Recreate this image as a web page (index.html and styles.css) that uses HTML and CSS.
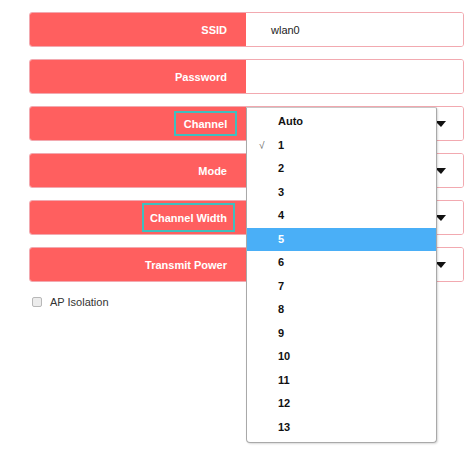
FILE: index.html
```
<!DOCTYPE html>
<html>
<head>
<meta charset="utf-8">
<link rel="stylesheet" href="styles.css">
</head>
<body>
<div class="form">
  <div class="row"><div class="label">SSID</div><div class="field">wlan0</div></div>
  <div class="row"><div class="label">Password</div><div class="field"></div></div>
  <div class="row"><div class="label"><span class="hl hl-channel">Channel</span></div><div class="field select"><span class="arrow"></span></div></div>
  <div class="row"><div class="label">Mode</div><div class="field select"><span class="arrow"></span></div></div>
  <div class="row"><div class="label"><span class="hl hl-width">Channel Width</span></div><div class="field select"><span class="arrow"></span></div></div>
  <div class="row"><div class="label">Transmit Power</div><div class="field select"><span class="arrow"></span></div></div>
  <label class="check"><span class="box"></span>AP Isolation</label>

  <ul class="dropdown">
    <li>Auto</li>
    <li class="checked">1</li>
    <li>2</li>
    <li>3</li>
    <li>4</li>
    <li class="active">5</li>
    <li>6</li>
    <li>7</li>
    <li>8</li>
    <li>9</li>
    <li>10</li>
    <li>11</li>
    <li>12</li>
    <li>13</li>
  </ul>
</div>
</body>
</html>
```

FILE: styles.css
```
html, body {
  margin: 0;
  padding: 0;
  background: #fff;
  font-family: "Liberation Sans", Arial, sans-serif;
}

body {
  min-height: 452px;
}

.form {
  position: relative;
  width: 435px;
  min-height: 440px;
  margin-left: 29px;
  padding-top: 12px;
  display: flex;
  flex-direction: column;
  gap: 12px;
}

.row {
  display: flex;
  height: 35px;
  box-sizing: border-box;
  border: 1px solid #f2a9b0;
  border-radius: 3px;
  overflow: hidden;
}

.label {
  width: 217px;
  flex: none;
  background: #ff5f5f;
  color: #fff;
  font-weight: bold;
  font-size: 11px;
  display: flex;
  align-items: center;
  justify-content: flex-end;
  padding-right: 19px;
  box-sizing: border-box;
  margin: -1px 0 -1px -1px;
}

.hl {
  display: inline-flex;
  align-items: center;
  justify-content: center;
  box-sizing: border-box;
  border: 2px solid #3fbfbf;
}

.hl-channel {
  width: 63px;
  height: 25px;
  margin-right: -10px;
}

.hl-width {
  width: 93px;
  height: 29px;
  margin-right: -8px;
}

.field {
  flex: 1;
  background: #fff;
  font-size: 11px;
  color: #222;
  display: flex;
  align-items: center;
  padding-left: 25px;
}

.select {
  justify-content: flex-end;
  padding-right: 17px;
}

.arrow {
  width: 0;
  height: 0;
  border-left: 6px solid transparent;
  border-right: 5px solid transparent;
  border-top: 6px solid #111;
  margin-top: 1px;
}

.check {
  display: flex;
  align-items: center;
  font-size: 11px;
  color: #333;
  margin-top: 1px;
  margin-left: 3px;
  height: 14px;
}

.box {
  width: 8px;
  height: 8px;
  border: 1px solid #b8b8b8;
  border-radius: 2px;
  background: #ececec;
  margin-right: 8px;
}

.dropdown {
  position: absolute;
  left: 217px;
  top: 107px;
  width: 191px;
  box-sizing: border-box;
  margin: 0;
  list-style: none;
  padding: 2px 0 3px;
  background: #fff;
  border: 1px solid #a9a9a9;
  border-top-color: #c8c8c8;
  border-radius: 0 2px 4px 4px;
  box-shadow: 1px 1px 2px rgba(0,0,0,0.15);
}

.dropdown li {
  height: 23.5px;
  line-height: 23.5px;
  padding-left: 31px;
  font-size: 11px;
  font-weight: bold;
  color: #111;
  position: relative;
}

.dropdown li.checked::before {
  content: "\221A";
  position: absolute;
  left: 12px;
  font-weight: normal;
  color: #666;
  font-size: 10px;
}

.dropdown li.active {
  background: #4aaff7;
  color: #fff;
}
```
